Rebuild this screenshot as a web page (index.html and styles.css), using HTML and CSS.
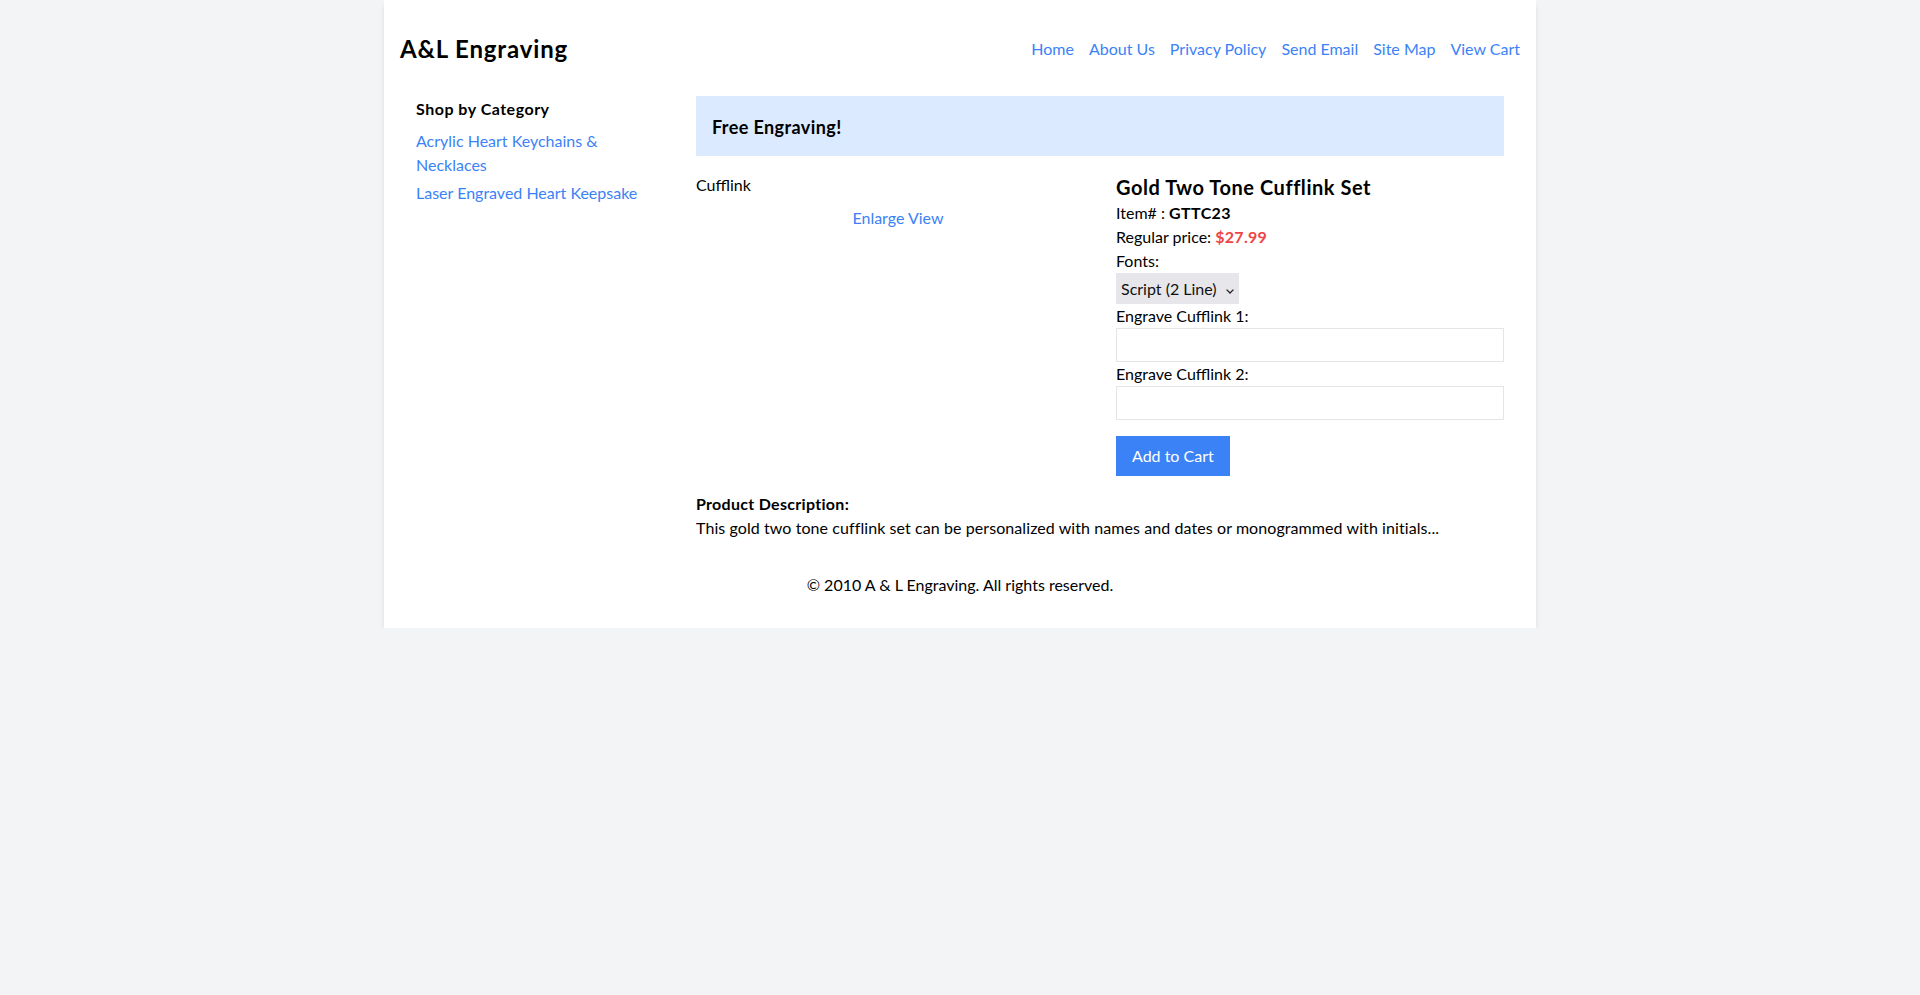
FILE: index.html
```html
<!DOCTYPE html>
<html lang="en">
<head>
<meta charset="utf-8">
<title>Gold Two Tone Cufflink Set - A&amp;L Engraving</title>
<link rel="stylesheet" href="styles.css">
</head>
<body>
<div class="page">
  <header class="site-header">
    <h1 class="logo">A&amp;L Engraving</h1>
    <nav class="top-nav">
      <a href="#">Home</a>
      <a href="#">About Us</a>
      <a href="#">Privacy Policy</a>
      <a href="#">Send Email</a>
      <a href="#">Site Map</a>
      <a href="#">View Cart</a>
    </nav>
  </header>
  <div class="layout">
    <aside class="sidebar">
      <h2 class="sidebar-title">Shop by Category</h2>
      <ul class="cat-list">
        <li><a href="#">Acrylic Heart Keychains &amp; Necklaces</a></li>
        <li><a href="#">Laser Engraved Heart Keepsake</a></li>
      </ul>
    </aside>
    <main class="content">
      <div class="banner"><h2>Free Engraving!</h2></div>
      <div class="product">
        <div class="product-media">
          <div class="img-alt">Cufflink</div>
          <a class="enlarge" href="#">Enlarge View</a>
        </div>
        <div class="product-info">
          <h3 class="product-name">Gold Two Tone Cufflink Set</h3>
          <p class="line">Item# : <strong class="strong">GTTC23</strong></p>
          <p class="line">Regular price: <span class="price">$27.99</span></p>
          <label class="line" for="fonts">Fonts:</label>
          <span class="select-wrap">
            <select id="fonts" class="select">
              <option>Script (2 Line)</option>
            </select>
            <svg class="chev" width="8" height="5" viewBox="0 0 8 5"><path d="M0.6 0.6l3.4 3.4 3.4-3.4" fill="none" stroke="#222" stroke-width="1.3"/></svg>
          </span>
          <label class="line" for="e1">Engrave Cufflink 1:</label>
          <input id="e1" class="text-input" type="text">
          <label class="line" for="e2">Engrave Cufflink 2:</label>
          <input id="e2" class="text-input" type="text">
          <button class="btn" type="button">Add to Cart</button>
        </div>
      </div>
      <div class="description">
        <p class="desc-title">Product Description:</p>
        <p class="line desc-text">This gold two tone cufflink set can be personalized with names and dates or monogrammed with initials...</p>
      </div>
    </main>
  </div>
  <footer class="site-footer">© 2010 A &amp; L Engraving. All rights reserved.</footer>
</div>
</body>
</html>
```
FILE: styles.css
```css
* { box-sizing: border-box; }
html, body { margin: 0; padding: 0; }
body {
  background: #f3f4f6;
  font-family: Lato, "Noto Sans", sans-serif;
  font-size: 16px;
  line-height: 24px;
  color: #000;
}
a { color: #3b82f6; text-decoration: none; }
p { margin: 0; }
.page {
  max-width: 1152px;
  margin: 0 auto;
  background: #fff;
  padding: 16px;
  box-shadow: 0 4px 6px -1px rgba(0,0,0,0.1), 0 2px 4px -2px rgba(0,0,0,0.1);
}
.site-header {
  display: flex;
  justify-content: space-between;
  align-items: center;
  padding: 17px 0 15px;
}
.logo { margin: 0; font-size: 24px; line-height: 32px; font-weight: 700; letter-spacing: 0.85px; }
.top-nav { display: flex; gap: 15px; }
.layout { display: flex; }
.sidebar { width: 25%; padding: 17px 16px 15px; }
.sidebar-title { margin: 0 0 8px; font-size: 16px; line-height: 24px; font-weight: 700; letter-spacing: 0.5px; }
.cat-list { list-style: none; margin: 0; padding: 0; }
.cat-list li + li { margin-top: 4px; }
.content { width: 75%; padding: 16px; }
.banner { background: #dbeafe; padding: 17px 16px 15px; }
.banner h2 { margin: 0; font-size: 18px; line-height: 28px; font-weight: 700; letter-spacing: 0.4px; }
.product {
  display: grid;
  grid-template-columns: 404px 1fr;
  gap: 16px;
  margin-top: 16px;
}
.product-media { display: flex; flex-direction: column; padding-top: 1px; }
.enlarge { align-self: center; margin-top: 9px; }
.product-info { display: flex; flex-direction: column; align-items: flex-start; }
.product-name { margin: 1px 0 0; font-size: 20px; line-height: 28px; font-weight: 700; letter-spacing: 0.55px; }
.line { display: block; }
.strong { letter-spacing: 0.4px; }
.price { color: #ef4444; font-weight: 700; letter-spacing: 0.3px; }
.select-wrap { position: relative; display: inline-block; }
.select {
  appearance: none;
  -webkit-appearance: none;
  width: 123px;
  height: 31px;
  padding: 0 0 0 5px;
  border: 0;
  border-radius: 0;
  background: #e7e7eb;
  font: inherit;
  color: #111;
}
.chev { position: absolute; right: 5px; top: 16px; pointer-events: none; }
.text-input {
  width: 100%;
  height: 34px;
  border: 1px solid #e5e5e5;
  padding: 4px 8px;
  font: inherit;
}
.btn {
  margin-top: 16px;
  background: #3b82f6;
  color: #fff;
  border: 0;
  padding: 8px 16px;
  font: inherit;
  line-height: 24px;
  cursor: pointer;
}
.description { margin-top: 16px; }
.desc-title { font-weight: 700; letter-spacing: 0.3px; }
.desc-text { letter-spacing: 0.08px; }
.site-footer { text-align: center; padding: 17px 0 15px; }
```
